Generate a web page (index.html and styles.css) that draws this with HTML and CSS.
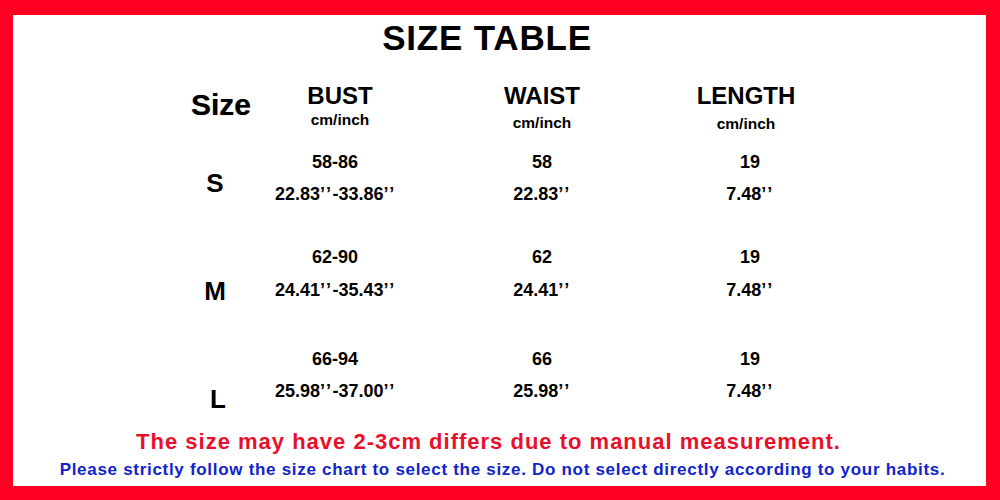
FILE: index.html
```html
<!DOCTYPE html>
<html>
<head>
<meta charset="utf-8">
<link rel="stylesheet" href="styles.css">
</head>
<body>
<div class="frame">
  <h1 class="title">SIZE TABLE</h1>
  <div class="table">
    <div class="cell size-head">Size</div>
    <div class="cell head"><div class="hname">BUST</div><div class="unit">cm/inch</div></div>
    <div class="cell head"><div class="hname">WAIST</div><div class="unit unit-w">cm/inch</div></div>
    <div class="cell head"><div class="hname">LENGTH</div><div class="unit unit-l">cm/inch</div></div>

    <div class="cell letter letter-s">S</div>
    <div class="cell val bust row-s"><div>58-86</div><div>22.83<span class="q">’’</span>-33.86<span class="q">’’</span></div></div>
    <div class="cell val row-s"><div>58</div><div>22.83<span class="q">’’</span></div></div>
    <div class="cell val len row-s"><div>19</div><div>7.48<span class="q">’’</span></div></div>

    <div class="cell letter letter-m">M</div>
    <div class="cell val bust row-m"><div>62-90</div><div class="second">24.41<span class="q">’’</span>-35.43<span class="q">’’</span></div></div>
    <div class="cell val row-m"><div>62</div><div class="second">24.41<span class="q">’’</span></div></div>
    <div class="cell val len row-m"><div>19</div><div class="second">7.48<span class="q">’’</span></div></div>

    <div class="cell letter letter-l">L</div>
    <div class="cell val bust row-l"><div>66-94</div><div>25.98<span class="q">’’</span>-37.00<span class="q">’’</span></div></div>
    <div class="cell val row-l"><div>66</div><div>25.98<span class="q">’’</span></div></div>
    <div class="cell val len row-l"><div>19</div><div>7.48<span class="q">’’</span></div></div>
  </div>
  <p class="note-red">The size may have 2-3cm differs due to manual measurement.</p>
  <p class="note-blue">Please strictly follow the size chart to select the size. Do not select directly according to your habits.</p>
</div>
</body>
</html>
```
FILE: styles.css
```css
html, body {
  margin: 0;
  padding: 0;
  background: #ff0022;
}
.frame {
  width: 1000px;
  height: 500px;
  box-sizing: border-box;
  border-style: solid;
  border-color: #ff0022;
  border-width: 15px 14px 14px 13px;
  background: #ffffff;
  font-family: "Liberation Sans", Arial, sans-serif;
  font-weight: bold;
  color: #000;
  display: flex;
  flex-direction: column;
}
.title {
  margin: 3px 0 0 0;
  font-size: 35px;
  line-height: 40px;
  letter-spacing: 0.8px;
  text-align: center;
  padding-right: 25px;
}
.table {
  margin-top: 24px;
  margin-left: 142px;
  display: grid;
  grid-template-columns: 120px 130px 274px 134px;
  grid-template-rows: 64px 95px 102px 85px;
}
.cell {
  text-align: center;
}
.size-head {
  font-size: 30px;
  line-height: 30px;
  padding-top: 8px;
  padding-left: 12px;
  text-shadow: 0 0 1px rgba(0,0,0,0.5);
}
.hname {
  font-size: 24px;
  line-height: 28px;
}
.unit {
  font-size: 15.5px;
  line-height: 20px;
}
.unit-w { margin-top: 3px; }
.unit-l { margin-top: 4px; }
.val {
  font-size: 18px;
  line-height: 32px;
}
.val .second { margin-top: 1px; }
.bust { padding-right: 10px; }
.len { padding-left: 8px; }
.q {
  letter-spacing: 1.5px;
}
.letter {
  font-size: 26px;
  line-height: 32px;
}
.letter-s { padding-top: 21px; }
.letter-m { padding-top: 34px; }
.letter-l { padding-top: 40px; padding-left: 6px; }
.note-red {
  margin: 0;
  font-size: 22px;
  line-height: 28px;
  letter-spacing: 1px;
  color: #e8102a;
  text-align: center;
  padding-right: 22px;
}
.note-blue {
  margin: 0;
  font-size: 17px;
  line-height: 28px;
  letter-spacing: 0.7px;
  color: #1024cc;
  text-align: center;
  padding-left: 6px;
}
```
